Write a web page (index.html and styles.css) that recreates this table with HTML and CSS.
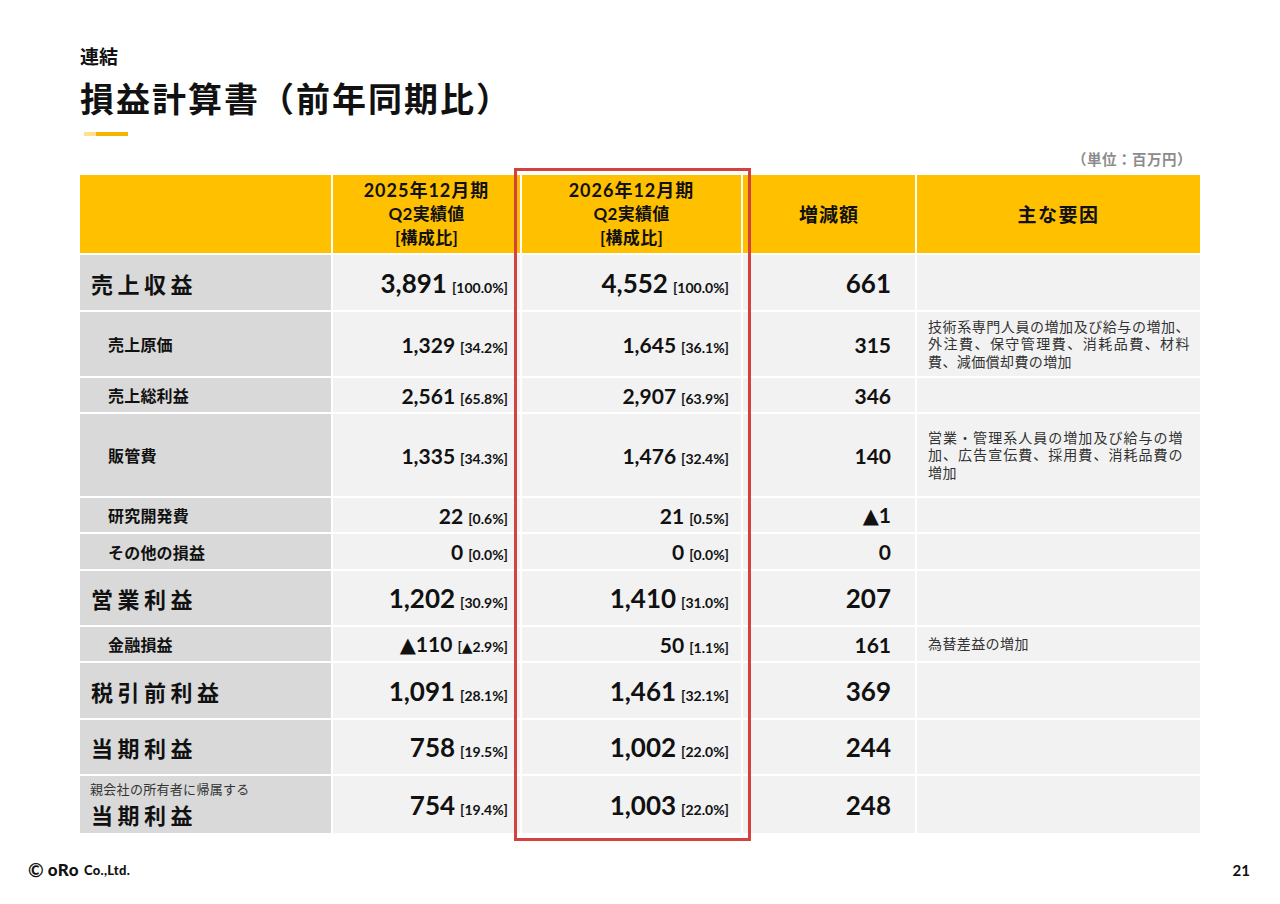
FILE: index.html
```html
<!DOCTYPE html>
<html lang="ja">
<head>
<meta charset="utf-8">
<title>損益計算書（前年同期比）</title>
<link rel="stylesheet" href="styles.css">
</head>
<body>
<div class="slide">
  <header class="head">
    <div class="sub">連結</div>
    <h1 class="title">損益計算書（前年同期比）</h1>
    <div class="bar"><span class="bar-l"></span><span class="bar-d"></span></div>
    <div class="unit">（単位：百万円）</div>
  </header>

  <div class="table-wrap">
    <div class="fin">
      <div class="c h"></div>
      <div class="c h"><div class="h1">2025年12月期</div><div class="h2">Q2実績値</div><div class="h2">[構成比]</div></div>
      <div class="c h"><div class="h1">2026年12月期</div><div class="h2">Q2実績値</div><div class="h2">[構成比]</div></div>
      <div class="c h"><div class="h3">増減額</div></div>
      <div class="c h"><div class="h4">主な要因</div></div>

      <div class="c lb big">売上収益</div>
      <div class="c v"><span><b class="nb">3,891</b><span class="p">[100.0%]</span></span></div>
      <div class="c v"><span><b class="nb">4,552</b><span class="p">[100.0%]</span></span></div>
      <div class="c d"><b class="nb">661</b></div>
      <div class="c r"></div>

      <div class="c lb sm">売上原価</div>
      <div class="c v"><span><b class="ns">1,329</b><span class="p">[34.2%]</span></span></div>
      <div class="c v"><span><b class="ns">1,645</b><span class="p">[36.1%]</span></span></div>
      <div class="c d"><b class="ns">315</b></div>
      <div class="c r"><div class="txt"><span class="ln j">技術系専門人員の増加及び給与の増加、</span><span class="ln j">外注費、保守管理費、消耗品費、材料</span><span class="ln">費、減価償却費の増加</span></div></div>

      <div class="c lb sm">売上総利益</div>
      <div class="c v"><span><b class="ns">2,561</b><span class="p">[65.8%]</span></span></div>
      <div class="c v"><span><b class="ns">2,907</b><span class="p">[63.9%]</span></span></div>
      <div class="c d"><b class="ns">346</b></div>
      <div class="c r"></div>

      <div class="c lb sm">販管費</div>
      <div class="c v"><span><b class="ns">1,335</b><span class="p">[34.3%]</span></span></div>
      <div class="c v"><span><b class="ns">1,476</b><span class="p">[32.4%]</span></span></div>
      <div class="c d"><b class="ns">140</b></div>
      <div class="c r"><div class="txt narrow"><span class="ln j">営業・管理系人員の増加及び給与の増</span><span class="ln j">加、広告宣伝費、採用費、消耗品費の</span><span class="ln">増加</span></div></div>

      <div class="c lb sm">研究開発費</div>
      <div class="c v"><span><b class="ns">22</b><span class="p">[0.6%]</span></span></div>
      <div class="c v"><span><b class="ns">21</b><span class="p">[0.5%]</span></span></div>
      <div class="c d"><b class="ns">▲1</b></div>
      <div class="c r"></div>

      <div class="c lb sm">その他の損益</div>
      <div class="c v"><span><b class="ns">0</b><span class="p">[0.0%]</span></span></div>
      <div class="c v"><span><b class="ns">0</b><span class="p">[0.0%]</span></span></div>
      <div class="c d"><b class="ns">0</b></div>
      <div class="c r"></div>

      <div class="c lb big">営業利益</div>
      <div class="c v"><span><b class="nb">1,202</b><span class="p">[30.9%]</span></span></div>
      <div class="c v"><span><b class="nb">1,410</b><span class="p">[31.0%]</span></span></div>
      <div class="c d"><b class="nb">207</b></div>
      <div class="c r"></div>

      <div class="c lb sm">金融損益</div>
      <div class="c v"><span><b class="ns">▲110</b><span class="p">[▲2.9%]</span></span></div>
      <div class="c v"><span><b class="ns">50</b><span class="p">[1.1%]</span></span></div>
      <div class="c d"><b class="ns">161</b></div>
      <div class="c r"><div class="txt"><span class="ln">為替差益の増加</span></div></div>

      <div class="c lb big">税引前利益</div>
      <div class="c v"><span><b class="nb">1,091</b><span class="p">[28.1%]</span></span></div>
      <div class="c v"><span><b class="nb">1,461</b><span class="p">[32.1%]</span></span></div>
      <div class="c d"><b class="nb">369</b></div>
      <div class="c r"></div>

      <div class="c lb big">当期利益</div>
      <div class="c v"><span><b class="nb">758</b><span class="p">[19.5%]</span></span></div>
      <div class="c v"><span><b class="nb">1,002</b><span class="p">[22.0%]</span></span></div>
      <div class="c d"><b class="nb">244</b></div>
      <div class="c r"></div>

      <div class="c lb big stack"><span class="note">親会社の所有者に帰属する</span><span class="main">当期利益</span></div>
      <div class="c v"><span><b class="nb">754</b><span class="p">[19.4%]</span></span></div>
      <div class="c v"><span><b class="nb">1,003</b><span class="p">[22.0%]</span></span></div>
      <div class="c d"><b class="nb">248</b></div>
      <div class="c r"></div>
    </div>
    <div class="highlight"></div>
  </div>

  <footer class="foot">
    <div class="logo"><span class="copy">©</span><span class="oro">oRo</span><span class="co">Co.,Ltd.</span></div>
    <div class="pageno">21</div>
  </footer>
</div>
</body>
</html>
```

FILE: styles.css
```css
* { box-sizing: border-box; }

body {
  margin: 0;
  background: #ffffff;
  font-family: "Noto Sans CJK JP", sans-serif;
  color: #111111;
}

.slide {
  width: 1280px;
  height: 904px;
  overflow: hidden;
  position: relative;
}

.head {
  padding: 44px 80px 0;
}

.sub {
  font-size: 19px;
  line-height: 24px;
  font-weight: 700;
}

.title {
  margin: 8px 0 0;
  font-size: 34px;
  line-height: 44px;
  font-weight: 700;
  letter-spacing: 2px;
}

.bar {
  display: flex;
  height: 4px;
  margin: 12px 0 0 4px;
}
.bar-l { width: 12px; background: #ffe08c; }
.bar-d { width: 32px; background: #f5b400; }

.unit {
  margin: 13px 0 6px;
  padding-right: 8px;
  text-align: right;
  font-size: 14.5px;
  line-height: 20px;
  font-weight: 700;
  letter-spacing: 0.5px;
  color: #8c8c8c;
}

.table-wrap {
  position: relative;
  margin: 0 80px;
}

.fin {
  display: grid;
  grid-template-columns: 251px 187px 219px 172px 283px;
  grid-template-rows: 78px 55px 64px 34px 82px 34px 35px 54px 34px 55px 54px 57px;
  gap: 2px;
}

.c {
  display: flex;
  align-items: center;
  min-width: 0;
}

.h {
  background: #ffc000;
  flex-direction: column;
  justify-content: center;
  text-align: center;
  font-weight: 700;
  color: #111;
}
.h1 {
  font-family: "Lato", "Noto Sans CJK JP", sans-serif;
  font-size: 18px;
  line-height: 24px;
  letter-spacing: 1px;
}
.h2 {
  font-family: "Lato", "Noto Sans CJK JP", sans-serif;
  font-size: 17px;
  line-height: 24px;
  letter-spacing: 0.3px;
}
.h3 { font-size: 19px; line-height: 26px; letter-spacing: 1px; }
.h4 { font-size: 19px; line-height: 26px; letter-spacing: 1.5px; }

.lb {
  background: #d9d9d9;
  font-weight: 700;
}
.lb.big {
  padding-left: 11px;
  font-size: 22px;
  letter-spacing: 4.5px;
}
.lb.sm {
  padding-left: 28px;
  font-size: 16px;
  letter-spacing: 0.2px;
}
.lb.stack {
  flex-direction: column;
  align-items: flex-start;
  justify-content: center;
}
.note {
  font-size: 13px;
  line-height: 19px;
  font-weight: 400;
  letter-spacing: 0.3px;
  color: #333;
  margin-left: -1px;
}
.main {
  line-height: 32px;
}

.v, .d {
  background: #f2f2f2;
  justify-content: flex-end;
  font-family: "Lato", "DejaVu Sans", "Noto Sans CJK JP", sans-serif;
  color: #111;
  white-space: nowrap;
}
.v { padding-right: 12px; }
.d { padding-right: 24px; }

.nb { font-size: 26px; font-weight: 700; }
.ns { font-size: 21px; font-weight: 700; }
.p {
  margin-left: 5px;
  font-size: 14px;
  font-weight: 700;
}

.r {
  background: #f2f2f2;
  padding: 0 10px 0 11px;
}
.txt {
  width: 100%;
  font-size: 14px;
  line-height: 17.5px;
  letter-spacing: 0.4px;
  color: #333;
}
.txt.narrow { padding-right: 7px; }
.ln {
  display: block;
  white-space: nowrap;
}
.ln.j {
  text-align: justify;
  text-align-last: justify;
}

.highlight {
  position: absolute;
  left: 434px;
  top: -7px;
  width: 237px;
  height: 673px;
  border: 3px solid #d2423e;
  pointer-events: none;
}

.foot {
  display: flex;
  justify-content: space-between;
  align-items: center;
  margin-top: 27px;
  padding: 0 30px 0 28px;
  height: 20px;
}
.logo {
  display: flex;
  align-items: center;
  font-family: "Lato", sans-serif;
  font-weight: 900;
  color: #111;
}
.copy { font-size: 19px; line-height: 20px; margin-right: 4px; font-weight: 700; }
.oro { font-size: 17px; line-height: 20px; margin-right: 5px; letter-spacing: 0.5px; }
.co { font-size: 13px; line-height: 20px; font-weight: 900; letter-spacing: 0.3px; }
.pageno {
  font-family: "Lato", sans-serif;
  font-size: 15px;
  font-weight: 700;
}
```
